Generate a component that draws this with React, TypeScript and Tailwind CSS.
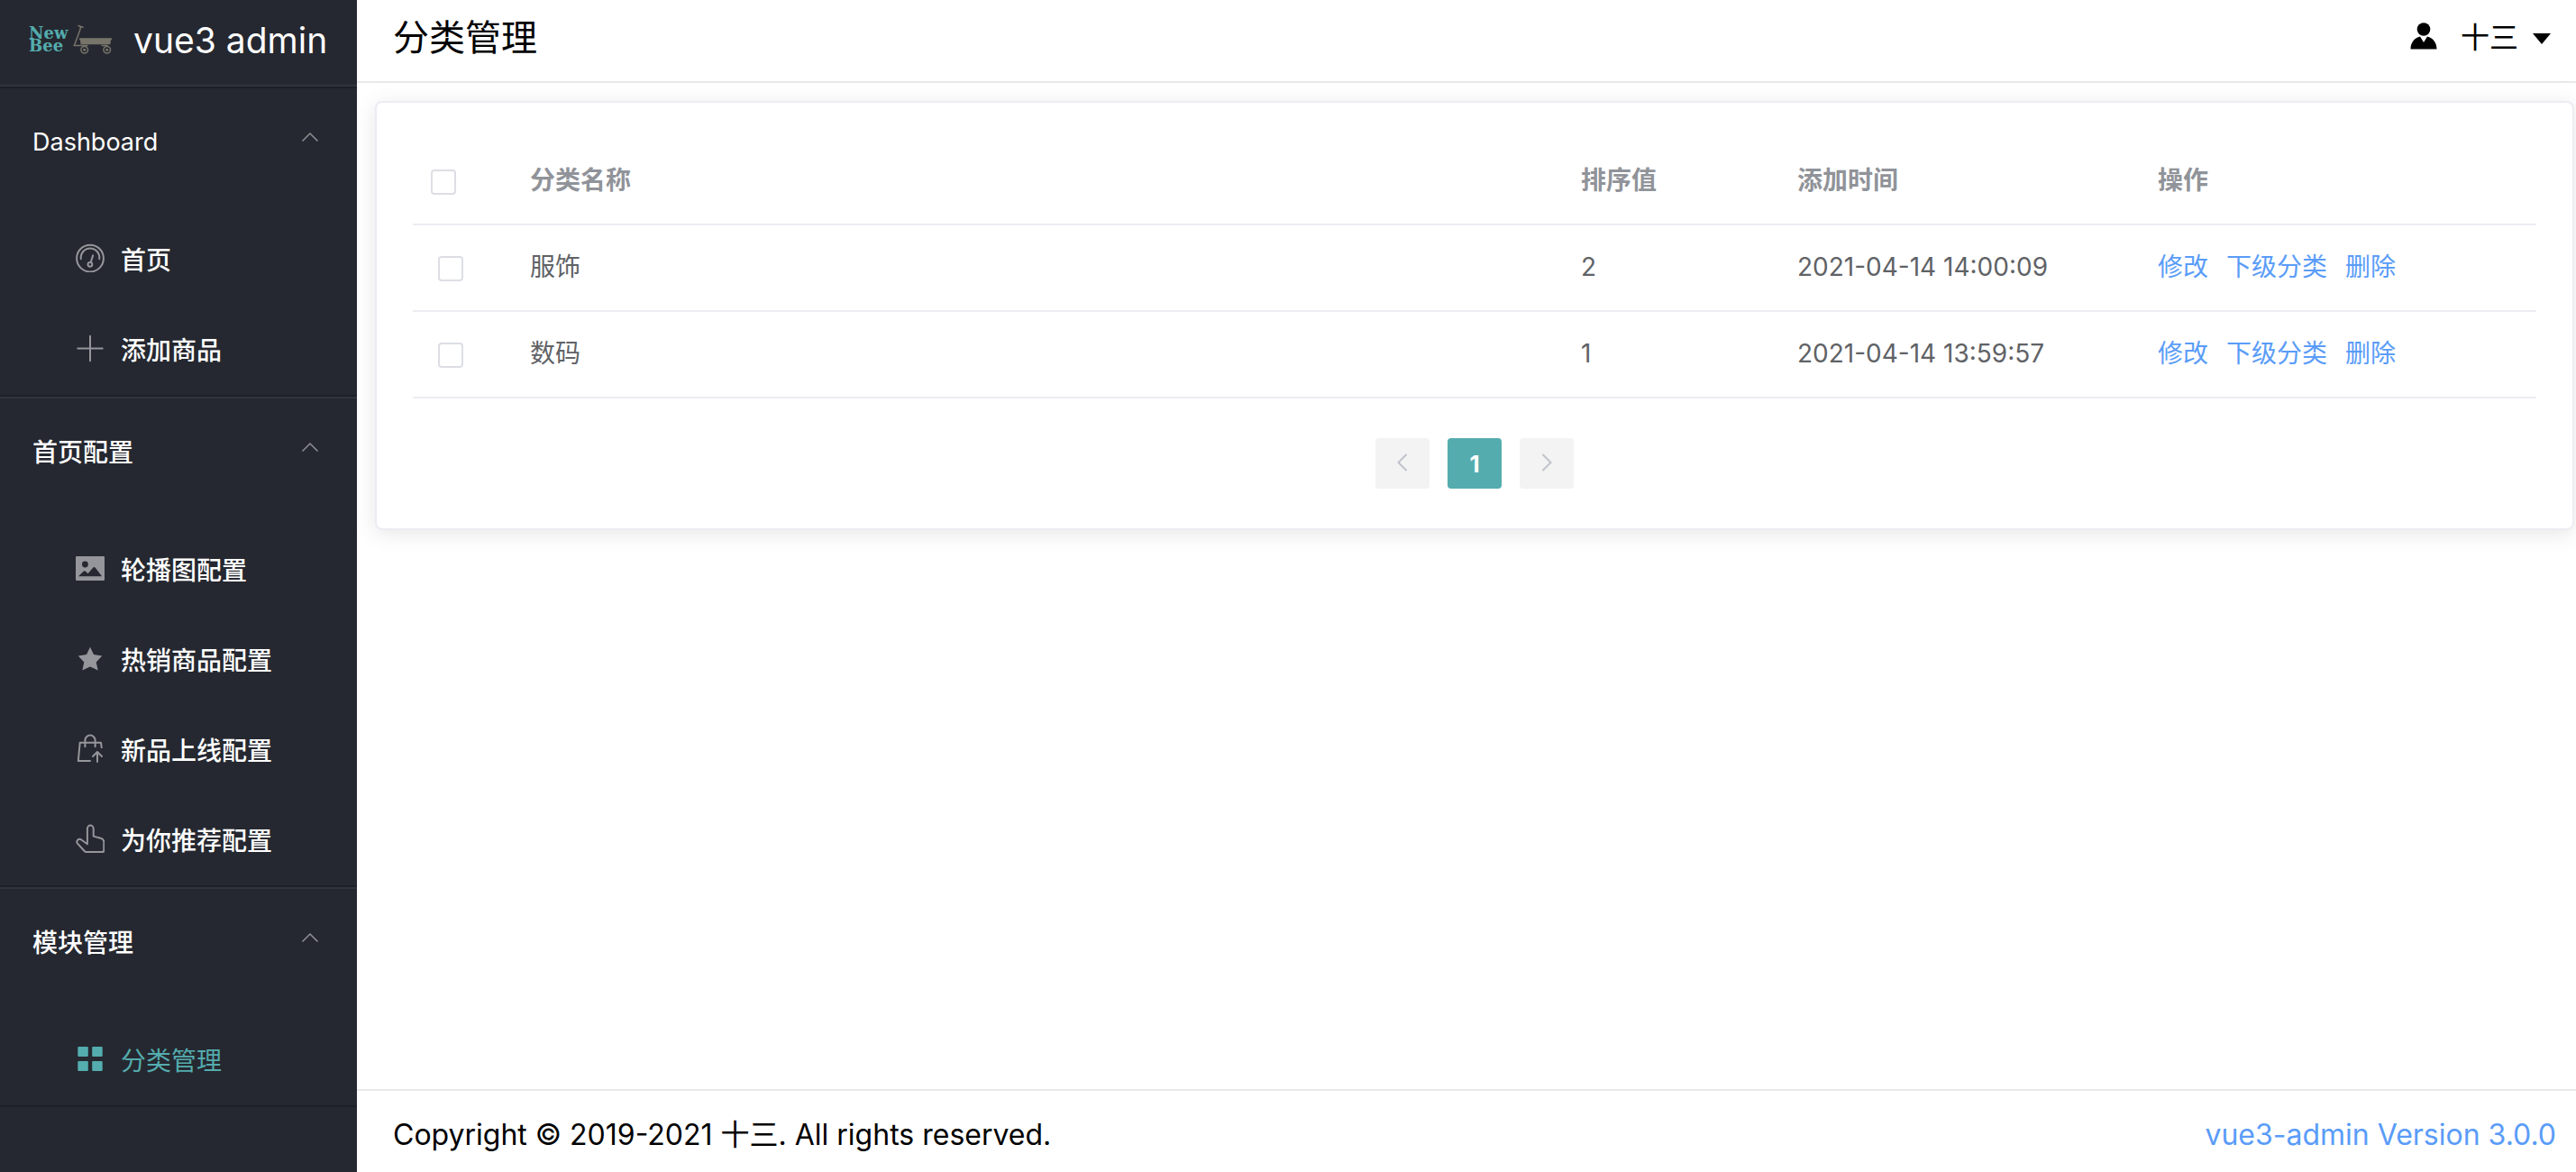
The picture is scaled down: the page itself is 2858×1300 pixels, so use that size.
import React from "react";
import type { ReactNode } from "react";

const strokeProps = {
  fill: "none",
  stroke: "currentColor",
  strokeWidth: 2,
  strokeLinecap: "round" as const,
  strokeLinejoin: "round" as const,
};

function MenuIcon({ children }: { children: ReactNode }) {
  return (
    <svg viewBox="0 0 32 32" className="mb-1 size-8 shrink-0" aria-hidden="true">
      {children}
    </svg>
  );
}

const icons: Record<string, ReactNode> = {
  odometer: (
    <g {...strokeProps}>
      <circle cx="16" cy="16.6" r="14.9" />
      <path d="M5.8 17.2a10.3 10.3 0 1 1 20.4 0" />
      <circle cx="15.9" cy="23.3" r="2.4" />
      <path d="M16.8 20.6l2.3-7.2" />
    </g>
  ),
  plus: <path {...strokeProps} d="M16 2.8v27.4M2.3 16.4h27.4" />,
  picture: (
    <path
      fill="currentColor"
      fillRule="evenodd"
      d="M1 3h30a1 1 0 0 1 1 1v25a1 1 0 0 1-1 1H1a1 1 0 0 1-1-1V4a1 1 0 0 1 1-1zM10.4 8.6a3.4 3.4 0 1 0 0 6.8 3.4 3.4 0 0 0 0-6.8zM3 25.2h26l-7.4-9.6q-1.1-1-2.2 0l-5.9 6.6-2.3-2.3q-1.4-1.2-2.8 0z"
    />
  ),
  star: (
    <path
      fill="currentColor"
      d="M16 3.7L20 12l9.3 1.5-6.6 7 2 9-8.7-4.1-8.7 4.100 2-9-6.6-7L12 12z"
    />
  ),
  bag: (
    <g {...strokeProps}>
      <path d="M10.4 14.2V7.2a5.6 5.6 0 0 1 11.2 0v7" />
      <path d="M28.7 15.2L28 9.7H4.7L2.8 30H16" />
      <path d="M24 31V20.5M19 25l5-5 5 5" />
    </g>
  ),
  pointer: (
    <path
      {...strokeProps}
      d="M12.9 22.3V5a3.4 3.4 0 0 1 6.800 0v8.600l8 2.200q3.600 1 3.600 4.400v8.800q0 2.100-2.100 2.100H11.700q-1.100 0-1.800-.9L2 21.600q-1.500-2 .1-3.800 2-1.900 4.500-.1z"
    />
  ),
  grid: (
    <g fill="currentColor">
      <rect x="2.3" y="3" width="11.5" height="11" rx="1" />
      <rect x="18.2" y="3" width="11.5" height="11" rx="1" />
      <rect x="2.3" y="19" width="11.5" height="11" rx="1" />
      <rect x="18.2" y="19" width="11.5" height="11" rx="1" />
    </g>
  ),
};

type Item = { label: string; icon: string; active?: boolean };

const groups: { title: string; titleClass: string; items: Item[] }[] = [
  {
    title: "Dashboard",
    titleClass: "text-[27px]",
    items: [
      { label: "首页", icon: "odometer" },
      { label: "添加商品", icon: "plus" },
    ],
  },
  {
    title: "首页配置",
    titleClass: "text-[28px] font-medium",
    items: [
      { label: "轮播图配置", icon: "picture" },
      { label: "热销商品配置", icon: "star" },
      { label: "新品上线配置", icon: "bag" },
      { label: "为你推荐配置", icon: "pointer" },
    ],
  },
  {
    title: "模块管理",
    titleClass: "text-[28px] font-medium",
    items: [{ label: "分类管理", icon: "grid", active: true }],
  },
];

const rows = [
  { name: "服饰", rank: 2, time: "2021-04-14 14:00:09" },
  { name: "数码", rank: 1, time: "2021-04-14 13:59:57" },
];

function Logo() {
  return (
    <div className="flex items-start">
      <div className="w-12 pt-1 font-['DejaVu_Serif'] text-[18px] leading-[14px] font-bold text-[#54acae]">
        New Bee
      </div>
      <svg viewBox="0 0 46 36" className="h-9 w-[46px]" aria-hidden="true">
        <g fill="none" stroke="#77746a" strokeLinecap="round">
          <path d="M7 2.5l5 1.800M9.5 4L8.500 8 2.800 23.500" strokeWidth="1.5" />
          <path d="M2 24.5h15M33 24.5h6" strokeWidth="1.5" />
          <circle cx="13.7" cy="29.3" r="3.8" strokeWidth="1.5" />
          <circle cx="38.7" cy="29.3" r="3.8" strokeWidth="1.5" />
        </g>
        <g fill="#77746a">
          <path d="M8 16.3h36v1.900h-1l-.6 5.100H9.500L9 18.200H8z" />
          <circle cx="13.7" cy="29.3" r="1.5" />
          <circle cx="38.7" cy="29.3" r="1.5" />
        </g>
      </svg>
    </div>
  );
}

function Checkbox({ label }: { label: string }) {
  return (
    <input
      type="checkbox"
      aria-label={label}
      className="mt-0.5 block size-7 appearance-none rounded-[4px] border-2 border-[#dddee5] bg-white checked:border-[#54acae] checked:bg-[#54acae]"
    />
  );
}

function Sidebar() {
  return (
    <aside className="w-[396px] shrink-0 bg-[#252830] text-white">
      <div className="flex h-24 items-center border-b-2 border-[#30343e] pb-1.5 pl-8">
        <Logo />
        <span className="ml-[22px] text-[39px] leading-none">vue3 admin</span>
      </div>
      <nav>
        {groups.map((g) => (
          <section
            key={g.title}
            className="border-y-2 border-t-[#30343e] border-b-[#1d2027] first:border-t-[#1d2027]"
          >
            <button
              type="button"
              className="flex h-[112px] w-full items-center justify-between pr-[42px] pl-9"
            >
              <span className={g.titleClass}>
                <span className="block pt-2">{g.title}</span>
              </span>
              <svg viewBox="0 0 20 12" className="mb-1 h-3 w-5" aria-hidden="true">
                <path
                  d="M1.5 10.5L10 2l8.500 8.500"
                  fill="none"
                  stroke="#8f9095"
                  strokeWidth="1.5"
                />
              </svg>
            </button>
            <ul className="pt-7">
              {g.items.map((it) => (
                <li key={it.label}>
                  <a
                    href="#"
                    className={
                      it.active
                        ? "flex h-[100px] items-center gap-[18px] pl-[84px] text-[28px] text-[#54acae]"
                        : "flex h-[100px] items-center gap-[18px] pl-[84px] text-[28px] text-white"
                    }
                  >
                    <span className={it.active ? "text-[#54acae]" : "text-[#95969b]"}>
                      <MenuIcon>{icons[it.icon]}</MenuIcon>
                    </span>
                    <span className={it.active ? "pt-0.5" : "pt-0.5 font-medium"}>{it.label}</span>
                  </a>
                </li>
              ))}
            </ul>
          </section>
        ))}
      </nav>
    </aside>
  );
}

function Header() {
  return (
    <header className="flex h-[92px] shrink-0 items-center justify-between border-b-2 border-[#e9e9e9] bg-white pr-7 pb-1.5 pl-10">
      <h1 className="text-[40px] leading-none">分类管理</h1>
      <button type="button" className="flex items-center text-[32px] leading-none">
        <svg viewBox="0 0 30 30" className="mr-[26px] mb-1 size-[30px]" aria-hidden="true">
          <circle cx="15" cy="7.5" r="7.3" />
          <path d="M0.5 29.5C.5 22 5 17 11 15.500l4 6.500 4-6.500C25 17 29.500 22 29.500 29.500z" />
        </svg>
        十三
        <svg viewBox="0 0 20 12" className="mt-0.5 ml-4 h-3 w-5" aria-hidden="true">
          <path d="M0 0h20L10 12z" />
        </svg>
      </button>
    </header>
  );
}

const cell = "border-b-2 border-[#edecf3] px-5 pb-0.5";

function CategoryTable() {
  return (
    <table className="w-full table-fixed border-separate border-spacing-0 text-left text-[28px]">
      <colgroup>
        <col className="w-[110px]" />
        <col />
        <col className="w-[240px]" />
        <col className="w-[400px]" />
        <col className="w-[440px]" />
      </colgroup>
      <thead className="text-[#909399]">
        <tr className="h-24">
          <th className="border-b-2 border-[#edecf3] pl-5">
            <Checkbox label="全选" />
          </th>
          <th className={cell}>分类名称</th>
          <th className={cell}>排序值</th>
          <th className={cell}>添加时间</th>
          <th className={cell}>操作</th>
        </tr>
      </thead>
      <tbody className="text-[#606266]">
        {rows.map((r) => (
          <tr key={r.name} className="h-24">
            <td className="border-b-2 border-[#edecf3] pl-7">
              <Checkbox label={r.name} />
            </td>
            <td className={cell}>{r.name}</td>
            <td className={cell}>{r.rank}</td>
            <td className={cell}>{r.time}</td>
            <td className={cell}>
              <div className="flex gap-5 text-[#5a9cf8]">
                <a href="#">修改</a>
                <a href="#">下级分类</a>
                <a href="#">删除</a>
              </div>
            </td>
          </tr>
        ))}
      </tbody>
    </table>
  );
}

function Pagination() {
  return (
    <div className="flex justify-center gap-5 py-11">
      <button
        type="button"
        aria-label="上一页"
        className="flex h-14 w-[60px] items-center justify-center rounded-[4px] bg-[#f3f3f4] pb-0.5"
      >
        <svg viewBox="0 0 14 20" className="h-5 w-3.5" aria-hidden="true">
          <path d="M11 1.5L2.500 10l8.500 8.500" fill="none" stroke="#c0c2cb" strokeWidth="2" strokeLinecap="round" />
        </svg>
      </button>
      <button
        type="button"
        className="h-14 w-[60px] rounded-[4px] bg-[#54acae] text-[26px] font-bold text-white"
      >
        1
      </button>
      <button
        type="button"
        aria-label="下一页"
        className="flex h-14 w-[60px] items-center justify-center rounded-[4px] bg-[#f3f3f4] pb-0.5"
      >
        <svg viewBox="0 0 14 20" className="h-5 w-3.5" aria-hidden="true">
          <path d="M3 1.5l8.500 8.500L3 18.500" fill="none" stroke="#c0c2cb" strokeWidth="2" strokeLinecap="round" />
        </svg>
      </button>
    </div>
  );
}

export default function App() {
  return (
    <div className="flex min-h-screen bg-white font-['Inter','Noto_Sans_CJK_SC',sans-serif] text-black">
      <Sidebar />
      <div className="flex min-w-0 grow flex-col">
        <Header />
        <main className="grow overflow-hidden pt-5 pr-0.5 pl-5">
          <div className="rounded-lg border-2 border-[#edecf3] bg-white px-10 pt-10 shadow-[0_4px_24px_rgba(0,0,0,0.1)]">
            <CategoryTable />
            <Pagination />
          </div>
        </main>
        <footer className="flex h-[92px] shrink-0 items-center justify-between border-t-2 border-[#e9e9e9] pt-2 pr-[22px] pl-10 text-[32px]">
          <span>Copyright © 2019-2021 十三. All rights reserved.</span>
          <a href="#" className="text-[#5a9cf8]">
            vue3-admin Version 3.0.0
          </a>
        </footer>
      </div>
    </div>
  );
}
